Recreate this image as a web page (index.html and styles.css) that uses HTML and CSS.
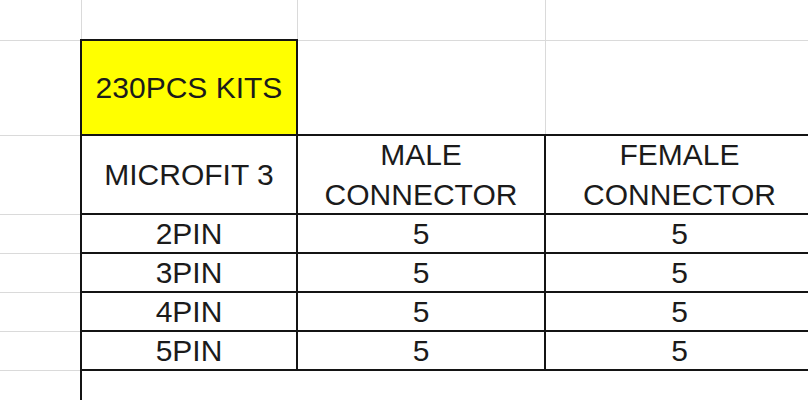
FILE: index.html
```html
<!DOCTYPE html>
<html>
<head>
<meta charset="utf-8">
<link rel="stylesheet" href="styles.css">
</head>
<body>
<table class="sheet">
  <colgroup>
    <col class="col-a">
    <col class="col-b">
    <col class="col-c">
    <col class="col-d">
  </colgroup>
  <tr class="r1">
    <td></td><td></td><td></td><td></td>
  </tr>
  <tr class="r2">
    <td></td>
    <td class="kit">230PCS KITS</td>
    <td></td><td></td>
  </tr>
  <tr class="r3">
    <td></td>
    <td class="box"><div class="wrap">MICROFIT 3</div></td>
    <td class="box"><div class="wrap">MALE CONNECTOR</div></td>
    <td class="box"><div class="wrap">FEMALE CONNECTOR</div></td>
  </tr>
  <tr class="rd">
    <td></td><td class="box">2PIN</td><td class="box">5</td><td class="box">5</td>
  </tr>
  <tr class="rd">
    <td></td><td class="box">3PIN</td><td class="box">5</td><td class="box">5</td>
  </tr>
  <tr class="rd">
    <td></td><td class="box">4PIN</td><td class="box">5</td><td class="box">5</td>
  </tr>
  <tr class="rd">
    <td></td><td class="box">5PIN</td><td class="box">5</td><td class="box">5</td>
  </tr>
  <tr class="r8">
    <td></td><td class="tail-b"></td><td class="tail"></td><td class="tail"></td>
  </tr>
</table>
</body>
</html>
```

FILE: styles.css
```css
html, body {
  margin: 0;
  padding: 0;
  background: #ffffff;
  overflow: hidden;
  width: 808px;
  height: 400px;
}

.sheet {
  border-collapse: collapse;
  table-layout: fixed;
  width: 814px;
  font-family: "Liberation Sans", Arial, sans-serif;
  font-size: 30px;
  color: #1b1b1b;
}

.col-a { width: 81px; }
.col-b { width: 216px; }
.col-c { width: 248px; }
.col-d { width: 269px; }

.sheet td {
  border: 1px solid #dadada;
  padding: 0;
  text-align: center;
  vertical-align: middle;
  line-height: 34px;
  white-space: normal;
}

.sheet tr:first-child td { border-top: none; }
.sheet td:first-child { border-left: none; }

.r1 { height: 40px; }
.r2 { height: 95px; }
.r3 { height: 79px; }
.rd { height: 39px; }
.r8 { height: 40px; }

.kit {
  background: #ffff00;
  border: 2px solid #141414 !important;
}

.box {
  border: 2px solid #141414 !important;
}

.wrap {
  height: 77px;
  display: flex;
  align-items: center;
  justify-content: center;
  line-height: 40px;
}

.tail-b {
  border-left: 2px solid #141414 !important;
  border-right: hidden !important;
  border-bottom: hidden !important;
}

.tail {
  border-left: hidden !important;
  border-right: hidden !important;
  border-bottom: hidden !important;
}
```
